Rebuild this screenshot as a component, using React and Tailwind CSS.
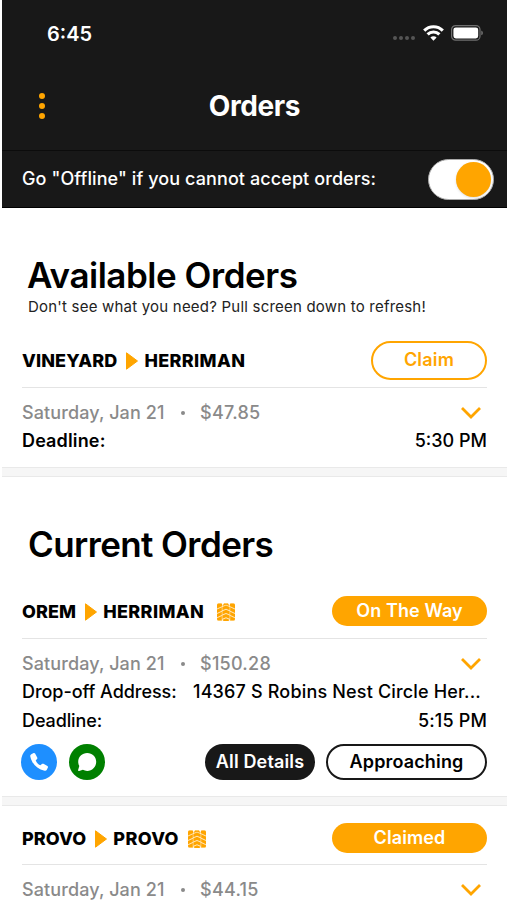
import { useState } from 'react'

const AVAILABLE = [
  { id: 1, from: 'VINEYARD', to: 'HERRIMAN', date: 'Saturday, Jan 21', price: '$47.85', deadline: '5:30 PM' },
]

const CURRENT = [
  {
    id: 2,
    from: 'OREM',
    to: 'HERRIMAN',
    date: 'Saturday, Jan 21',
    price: '$150.28',
    status: 'On The Way',
    address: '14367 S Robins Nest Circle Her...',
    deadline: '5:15 PM',
    wideGap: true,
  },
  { id: 3, from: 'PROVO', to: 'PROVO', date: 'Saturday, Jan 21', price: '$44.15', status: 'Claimed' },
]

function WifiIcon() {
  return (
    <svg className="w-[21px] h-4" viewBox="0 0 21 16" fill="none" stroke="#fff" strokeWidth="3.1">
      <path d="M1.2 5.6a13.2 13.2 0 0 1 18.6 0" />
      <path d="M4.6 9.400a8.4 8.4 0 0 1 11.8 0" />
      <path d="M10.5 15.8 7.4 12.6a4.4 4.4 0 0 1 6.2 0z" fill="#fff" stroke="none" />
    </svg>
  )
}

function BatteryIcon() {
  return (
    <svg className="w-8 h-4" viewBox="0 0 32 16">
      <rect x="0.6" y="0.6" width="28.4" height="14.6" rx="4" fill="none" stroke="#6f6f6f" strokeWidth="1.2" />
      <rect x="2.4" y="2.4" width="24.8" height="11" rx="2.4" fill="#fff" />
      <path d="M30.3 5.6q1.6.6 1.6 2.3t-1.6 2.3z" fill="#777" />
    </svg>
  )
}

function TreadIcon() {
  return (
    <svg className="w-[18px] h-[18px]" viewBox="0 0 18 18">
      <g fill="#ffa500" stroke="#ffa500" strokeWidth="0.25">
        <path d="M1.500.500h2.700q.8 0 .8.800v2L0 5.500V2q0-1.500 1.500-1.500zM16.500.500h-2.700q-.8 0-.8.800v2l5 2.200V2q0-1.500-1.500-1.500zM7 .500h4l1.500 2.500L9 1.800 5.500 3z" />
        <path d="M0 6.500 4.800 4.300v3.400L0 9.900zM18 6.500l-4.800-2.200v3.400L18 9.900zM0 10.900l4.800-2.200v3.400L0 14.300zM18 10.900l-4.800-2.200v3.400l4.800 2.200zM0 15.300l4.800-2.200v4.400H1.500Q0 17.500 0 16zM18 15.300l-4.800-2.200v4.400h3.300q1.500 0 1.500-1.500z" />
        <path d="M5.400 4 9 2.500 12.600 4v3.300L9 5.700 5.400 7.300zM5.400 8.300 9 6.700l3.600 1.600v3.300L9 10 5.400 11.600zM5.400 12.600 9 11l3.600 1.600v3.100L9 14.200l-3.600 1.500zM5.600 16.700 9 15.200l3.400 1.500-1 1.300H6.600z" />
      </g>
    </svg>
  )
}

function PhoneIcon() {
  return (
    <svg className="w-[22px] h-[22px]" viewBox="0 0 22 22" fill="#fff">
      <path d="M3.300 3.200 5.600 2.100c.6-.3 1.200 0 1.500.5l2.100 3.900c.3.600.2 1.100-.2 1.600L7.700 9.600c1 2.200 2.500 3.700 4.700 4.700l1.500-1.300c.5-.4 1-.5 1.600-.2l3.900 2.100c.5.300.8.900.5 1.500l-1.100 2.300c-.4.900-1.200 1.300-2.200 1C8.900 17.900 4.100 13.100 2.300 5.400c-.2-1 .1-1.800 1-2.200z" />
    </svg>
  )
}

function ChatIcon() {
  return (
    <svg className="w-5 h-5" viewBox="0 0 20 20" fill="#fff">
      <path d="M10.200 1C5.200 1 1.200 4.900 1.200 9.800c0 1.600.4 3 1.100 4.200L1.100 18c-.2.800.3 1.200 1 1l3.800-1.200c1.300.7 2.700 1.100 4.300 1.100 5 0 9-4 9-9.100S15.200 1 10.200 1z" />
    </svg>
  )
}

function Route({ order }) {
  return (
    <div className="flex items-center pt-[2px] text-[18px] font-extrabold">
      <span className="tracking-[0.1px]">{order.from}</span>
      <svg className="w-3 h-[18px] ml-[9px] mr-[6px]" viewBox="0 0 12 18">
        <path d="M.5.800 11.500 9 .5 17.200z" fill="#ffa500" stroke="#ffa500" strokeLinejoin="round" />
      </svg>
      <span className="tracking-[0.35px]">{order.to}</span>
      {order.status && (
        <span className={order.wideGap ? 'ml-[13px]' : 'ml-[9px]'}>
          <TreadIcon />
        </span>
      )}
    </div>
  )
}

function Summary({ order }) {
  return (
    <div className="flex items-center h-[29px] text-[18px] font-medium text-[#8a8a8a]">
      <span className="w-[143px] whitespace-nowrap tracking-[0.1px]">{order.date}</span>
      <span className="w-[35px] flex justify-center">
        <span className="w-1 h-1 rounded-full bg-[#8a8a8a]" />
      </span>
      <span className="tracking-[0.25px]">{order.price}</span>
      <svg className="ml-auto mr-[6px] w-5 h-3" viewBox="0 0 20 12" fill="none" stroke="#ffa500" strokeWidth="2.8">
        <path d="m1 1 9 9 9-9" />
      </svg>
    </div>
  )
}

function Divider() {
  return <div className="h-[10px] bg-[#f6f6f6] border-y border-[#e9e9e9]" />
}

export default function App() {
  const [online, setOnline] = useState(true)

  return (
    <div className="w-[507px] h-[900px] overflow-hidden pl-[2px] bg-white text-black font-['Inter',sans-serif] leading-none">
      <header className="h-[208px] bg-[#181818] text-white border-b border-black">
        <div className="h-[66px] pl-[45px] pr-[24px] flex items-center justify-between">
          <span className="pt-px text-[20px] font-semibold">6:45</span>
          <div className="flex items-center">
            <div className="flex gap-[2px] mt-[10px] mr-[8px]">
              {[0, 1, 2, 3].map(i => (
                <span key={i} className="w-1 h-1 rounded-full bg-[#555]" />
              ))}
            </div>
            <WifiIcon />
            <span className="ml-[7px]"><BatteryIcon /></span>
          </div>
        </div>
        <div className="h-[85px] pb-[4px] grid grid-cols-[80px_1fr_80px] items-center border-b border-[#0c0c0c]">
          <button className="ml-[37px] flex flex-col gap-1 w-fit">
            <span className="w-[6px] h-[6px] rounded-full bg-[#ffa500]" />
            <span className="w-[6px] h-[6px] rounded-full bg-[#ffa500]" />
            <span className="w-[6px] h-[6px] rounded-full bg-[#ffa500]" />
          </button>
          <h1 className="text-center text-[28px] font-[650] tracking-[-0.4px]">Orders</h1>
        </div>
        <div className="h-[56px] pl-5 pr-[13px] flex items-center justify-between">
          <span className="text-[18px] font-[550] tracking-[0.09px]">Go "Offline" if you cannot accept orders:</span>
          <button
            onClick={() => setOnline(p => !p)}
            className={`w-[66px] h-[41px] p-[2px] rounded-full bg-white border border-[#aaa] flex items-center ${
              online ? 'justify-end' : 'justify-start'
            }`}
          >
            <span className="w-[35px] h-[35px] rounded-full bg-[#ffa500] shadow" />
          </button>
        </div>
      </header>

      <section>
        <div className="h-[125px] pl-[26px] pt-[50px]">
          <h2 className="-ml-px text-[35px] leading-[35px] font-[560] tracking-[-0.48px]">Available Orders</h2>
          <p className="mt-[6px] text-[15px] tracking-[0.21px] text-[#222]">
            Don't see what you need? Pull screen down to refresh!
          </p>
        </div>
        {AVAILABLE.map(order => (
          <article key={order.id}>
            <div className="px-5 h-[134px]">
              <div className="h-[55px] flex items-center justify-between border-b border-[#e4e4e4]">
                <Route order={order} />
                <button className="w-[116px] h-[39px] rounded-full border-2 border-[#ffa500] text-[#ffa500] text-[18px] font-semibold tracking-[0.2px]">
                  Claim
                </button>
              </div>
              <div className="pt-[10px]">
                <Summary order={order} />
                <div className="h-[28px] flex items-center justify-between text-[18px] font-semibold">
                  <span className="tracking-[0.15px]">Deadline:</span>
                  <span className="font-[550]">{order.deadline}</span>
                </div>
              </div>
            </div>
            <Divider />
          </article>
        ))}
      </section>

      <section>
        <div className="h-[107px] pl-[26px] pt-[50px]">
          <h2 className="text-[35px] leading-[35px] font-[560] tracking-[-0.6px]">Current Orders</h2>
        </div>
        {CURRENT.map(order => (
          <article key={order.id}>
            <div className={order.address ? 'px-5 h-[212px]' : 'px-5 h-[120px]'}>
              <div
                className={`flex items-center justify-between border-b border-[#e4e4e4] ${
                  order.address ? 'h-[55px]' : 'h-[59px] pt-[5px]'
                }`}
              >
                <Route order={order} />
                <span className="w-[155px] h-[30px] rounded-full bg-[#ffa500] text-white text-[18px] font-semibold tracking-[0.1px] flex items-center justify-center">
                  {order.status}
                </span>
              </div>
              <div className="pt-[10px] text-[18px] font-medium">
                <Summary order={order} />
                {order.address && (
                  <>
                    <div className="h-[28px] flex items-center whitespace-nowrap">
                      <span className="w-[171px] tracking-[-0.05px]">Drop-off Address:</span>
                      <span className="tracking-[0.17px]">{order.address}</span>
                    </div>
                    <div className="h-[29px] flex items-center justify-between">
                      <span className="tracking-[-0.1px]">Deadline:</span>
                      <span className="tracking-[0.15px]">{order.deadline}</span>
                    </div>
                    <div className="mt-[9px] -ml-px flex items-center">
                      <button className="w-9 h-9 rounded-full bg-[#1e8fff] flex items-center justify-center">
                        <PhoneIcon />
                      </button>
                      <button className="ml-3 w-9 h-9 rounded-full bg-[#008000] flex items-center justify-center">
                        <ChatIcon />
                      </button>
                      <button className="ml-auto w-[110px] h-9 rounded-full bg-[#181818] text-white font-semibold tracking-[0.15px] whitespace-nowrap">
                        All Details
                      </button>
                      <button className="ml-[11px] w-[161px] h-9 rounded-full border-2 border-[#181818] font-semibold tracking-[0.15px]">
                        Approaching
                      </button>
                    </div>
                  </>
                )}
              </div>
            </div>
            <Divider />
          </article>
        ))}
      </section>
    </div>
  )
}
